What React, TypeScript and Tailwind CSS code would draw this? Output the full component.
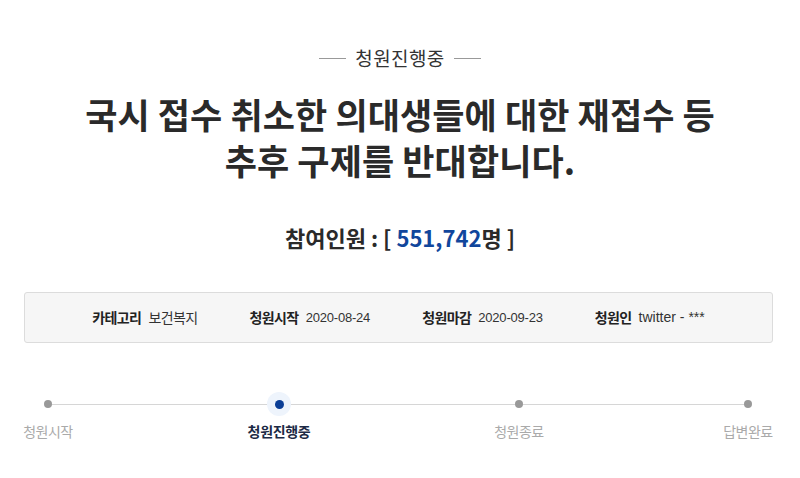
import React from "react";

const KR = { fontFamily: '"Noto Sans CJK KR", "Noto Sans", sans-serif' };
const MIX = { fontFamily: '"Liberation Sans", "Noto Sans CJK KR", sans-serif' };

function Item({ label, value, kr, big }: { label: string; value: string; kr?: boolean; big?: boolean }) {
  return (
    <div className="flex items-center gap-[7px]">
      <span className="text-[14px] font-bold tracking-[-0.6px] text-[#222]" style={KR}>
        {label}
      </span>
      {kr ? (
        <span className="text-[14px] tracking-[-0.6px] text-[#333]" style={KR}>
          {value}
        </span>
      ) : (
        <span
          className={big ? "text-[14px] tracking-[0px] text-[#333]" : "text-[13px] tracking-[-0.2px] text-[#333]"}
          style={MIX}
        >
          {value}
        </span>
      )}
    </div>
  );
}

function Step({ label, active }: { label: string; active?: boolean }) {
  return (
    <div className="flex w-[60px] flex-col items-center">
      <div className="relative flex h-[24px] w-[24px] items-center justify-center">
        {active && <div className="absolute inset-0 rounded-full bg-[#eef4fc]" />}
        <div
          className={
            active
              ? "relative h-[9px] w-[9px] rounded-full bg-[#0b3e96]"
              : "relative h-[8px] w-[8px] rounded-full bg-[#999]"
          }
        />
      </div>
      <div
        className={
          active
            ? "mt-[5px] whitespace-nowrap text-[14px] font-bold tracking-[-0.3px] text-[#1c2a45]"
            : "mt-[5px] whitespace-nowrap text-[14px] tracking-[-0.5px] text-[#aaa]"
        }
        style={KR}
      >
        {label}
      </div>
    </div>
  );
}

export default function App() {
  return (
    <div className="min-h-[478px] w-[800px] bg-white" style={KR}>
      <div className="flex items-center justify-center pt-[46px]">
        <div className="h-px w-[27px] bg-[#999]" />
        <div className="mx-[9px] text-[19px] leading-[24px] tracking-[0.4px] text-[#333]">
          청원진행중
        </div>
        <div className="h-px w-[27px] bg-[#999]" />
      </div>

      <h1 className="mt-[21px] text-center text-[35px] font-bold leading-[46px] tracking-[0.1px] text-[#2a2a2a]">
        국시 접수 취소한 의대생들에 대한 재접수 등
        <br />
        추후 구제를 반대합니다.
      </h1>

      <div className="mt-[39px] text-center text-[22px] font-bold leading-[30px] text-[#2a2a2a]">
        참여인원 : [ <span className="text-[#11469c]">551,742</span>명 ]
      </div>

      <div className="ml-[24px] mr-[27px] mt-[40px] flex h-[51px] items-center justify-center gap-[52px] rounded-[3px] border border-[#dcdcdc] bg-[#f6f6f6]">
        <Item label="카테고리" value="보건복지" kr />
        <Item label="청원시작" value="2020-08-24" />
        <Item label="청원마감" value="2020-09-23" />
        <Item label="청원인" value="twitter - ***" big />
      </div>

      <div className="relative mt-[49px]">
        <div className="absolute left-[48px] top-[12px] h-px w-[700px] bg-[#d6d6d6]" />
        <div className="relative flex">
          <div className="ml-[18px]">
            <Step label="청원시작" />
          </div>
          <div className="ml-[171px]">
            <Step label="청원진행중" active />
          </div>
          <div className="ml-[180px]">
            <Step label="청원종료" />
          </div>
          <div className="ml-[169px]">
            <Step label="답변완료" />
          </div>
        </div>
      </div>
    </div>
  );
}
